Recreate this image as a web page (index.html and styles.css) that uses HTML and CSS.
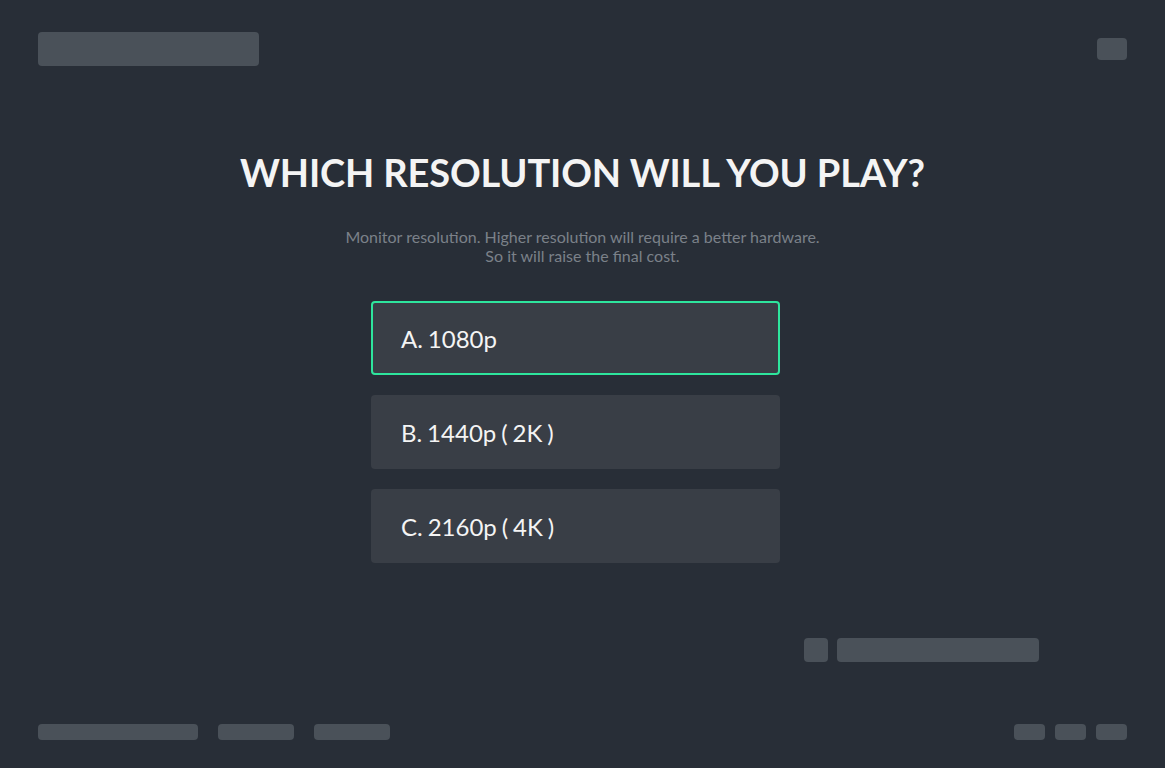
FILE: index.html
```html
<!DOCTYPE html>
<html lang="en">
<head>
    <meta charset="UTF-8">
    <meta name="viewport" content="width=device-width, initial-scale=1.0">
    <title>Build Quiz</title>
    <link rel="stylesheet" href="styles.css">
</head>
<body>

<div class="page">
    <header class="top">
        <div class="ph logo"></div>
        <div class="ph menu"></div>
    </header>

    <main class="quiz">
        <h1>WHICH RESOLUTION WILL YOU PLAY?</h1>
        <p class="hint">Monitor resolution. Higher resolution will require a better hardware.<br>So it will raise the final cost.</p>

        <div class="options">
            <button class="option selected">A. 1080p</button>
            <button class="option">B. 1440p ( 2K )</button>
            <button class="option">C. 2160p ( 4K )</button>
        </div>
    </main>

    <div class="progress">
        <div class="ph dot"></div>
        <div class="ph bar"></div>
    </div>

    <footer class="bottom">
        <div class="links">
            <div class="ph f-long"></div>
            <div class="ph f-mid"></div>
            <div class="ph f-mid"></div>
        </div>
        <div class="links small">
            <div class="ph f-small"></div>
            <div class="ph f-small"></div>
            <div class="ph f-small"></div>
        </div>
    </footer>
</div>

</body>
</html>
```

FILE: styles.css
```css
body {
    font-family: Lato, "Open Sans", sans-serif;
    margin: 0;
    padding: 0;
    background-color: #282e37;
    color: #f4f4f4;
}
.page {
    height: 768px;
    display: flex;
    flex-direction: column;
    padding: 0 38px;
    box-sizing: border-box;
}
.ph {
    background-color: #4a5159;
    border-radius: 4px;
}
.top {
    display: flex;
    justify-content: space-between;
    align-items: center;
    padding-top: 32px;
}
.logo {
    width: 221px;
    height: 34px;
}
.menu {
    width: 30px;
    height: 22px;
}
.quiz {
    display: flex;
    flex-direction: column;
    align-items: center;
}
h1 {
    font-size: 38px;
    font-weight: 700;
    line-height: 46px;
    letter-spacing: -0.15px;
    margin: 83px 0 0;
    text-align: center;
}
.hint {
    font-size: 16px;
    line-height: 19px;
    color: #7b8189;
    text-align: center;
    margin: 32px 0 0;
}
.options {
    display: flex;
    flex-direction: column;
    gap: 20px;
    margin: 36px 14px 0 0;
}
.option {
    width: 409px;
    height: 74px;
    padding: 0 0 0 28px;
    text-align: left;
    font-family: inherit;
    font-size: 24px;
    word-spacing: -1.2px;
    color: #f4f4f4;
    background-color: #393e46;
    border: 2px solid transparent;
    border-radius: 4px;
    cursor: pointer;
}
.option.selected {
    border-color: #2ee59d;
}
.progress {
    display: flex;
    justify-content: flex-end;
    gap: 9px;
    margin-top: 75px;
    padding-right: 88px;
}
.dot {
    width: 24px;
    height: 24px;
}
.bar {
    width: 202px;
    height: 24px;
}
.bottom {
    display: flex;
    justify-content: space-between;
    margin-top: auto;
    padding-bottom: 28px;
}
.links {
    display: flex;
    gap: 20px;
}
.links.small {
    gap: 10px;
}
.links .ph {
    height: 16px;
}
.f-long {
    width: 160px;
}
.f-mid {
    width: 76px;
}
.f-small {
    width: 31px;
}
```
